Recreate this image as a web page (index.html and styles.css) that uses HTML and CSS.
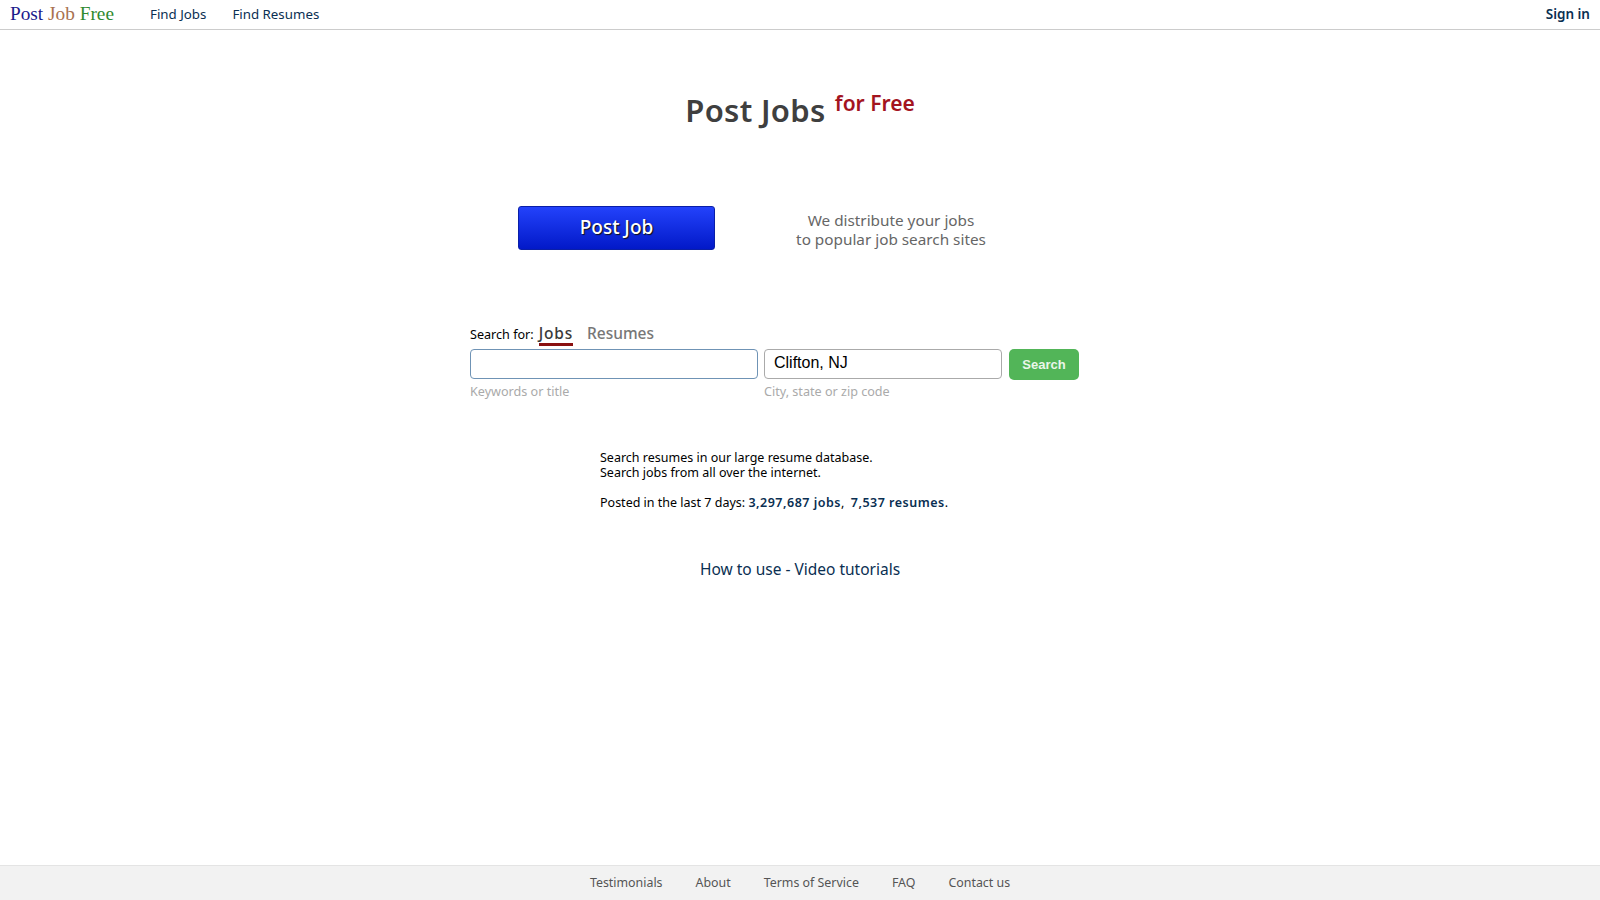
FILE: index.html
```html
<!DOCTYPE html>
<html lang="en">
<head>
    <meta charset="UTF-8">
    <meta name="viewport" content="width=device-width, initial-scale=1.0">
    <title>Post Job Free</title>
    <link rel="stylesheet" href="styles.css">
</head>
<body>

    <!-- Top bar -->
    <header class="topbar">
        <a class="logo" href="#"><span class="logo-post">Post</span> <span class="logo-job">Job</span> <span class="logo-free">Free</span></a>
        <nav class="topnav">
            <a href="#">Find Jobs</a>
            <a href="#">Find Resumes</a>
        </nav>
        <a class="signin" href="#">Sign in</a>
    </header>

    <main class="content">
        <h1 class="headline">Post Jobs <sup>for Free</sup></h1>

        <div class="post-row">
            <a class="post-button" href="#">Post Job</a>
            <p class="post-note">We distribute your jobs<br>to popular job search sites</p>
        </div>

        <!-- Search form -->
        <form class="search">
            <div class="search-tabs">
                <span class="search-label">Search for:</span>
                <a class="tab tab-active" href="#">Jobs</a>
                <a class="tab" href="#">Resumes</a>
            </div>
            <div class="search-fields">
                <div class="field">
                    <input class="input input-keywords" type="text">
                    <span class="hint">Keywords or title</span>
                </div>
                <div class="field">
                    <input class="input input-location" type="text" value="Clifton, NJ">
                    <span class="hint">City, state or zip code</span>
                </div>
                <button class="search-button" type="button">Search</button>
            </div>
        </form>

        <div class="stats">
            <p>Search resumes in our large resume database.<br>Search jobs from all over the internet.</p>
            <p>Posted in the last 7 days: <a href="#">3,297,687 jobs</a>, &nbsp;<a href="#">7,537 resumes</a>.</p>
        </div>

        <a class="tutorials" href="#">How to use - Video tutorials</a>
    </main>

    <footer class="footer">
        <a href="#">Testimonials</a>
        <a href="#">About</a>
        <a href="#">Terms of Service</a>
        <a href="#">FAQ</a>
        <a href="#">Contact us</a>
    </footer>

</body>
</html>
```

FILE: styles.css
```css
/* Global Styles */
* {
    margin: 0;
    padding: 0;
    box-sizing: border-box;
}

html, body {
    height: 100%;
}

body {
    font-family: 'Noto Sans', 'DejaVu Sans', sans-serif;
    font-size: 12.5px;
    color: #000;
    background: #fff;
    display: flex;
    flex-direction: column;
}

a {
    color: #0a2f52;
    text-decoration: none;
}

/* Top bar */
.topbar {
    display: flex;
    align-items: center;
    height: 30px;
    padding: 0 10px 2px;
    border-bottom: 1px solid #ccc;
    flex-shrink: 0;
}

.logo {
    width: 140px;
    font-family: 'Liberation Serif', serif;
    font-size: 19.3px;
}

.logo-post { color: #1a1a8c; }
.logo-job { color: #a8714f; }
.logo-free { color: #2f8a2f; }

.topnav {
    display: flex;
    gap: 26px;
    font-size: 13.3px;
}

.signin {
    margin-left: auto;
    font-size: 13.5px;
    font-weight: 600;
}

/* Main column */
.content {
    flex: 1;
    display: flex;
    flex-direction: column;
}

.headline {
    margin-top: 62px;
    text-align: center;
    font-size: 31px;
    line-height: 36px;
    font-weight: 600;
    letter-spacing: 0.3px;
    color: #3f3f3f;
}

.headline sup {
    font-size: 21px;
    line-height: 0;
    letter-spacing: 0;
    color: #a3141f;
    margin-left: 1px;
    vertical-align: 11px;
}

.post-row {
    display: flex;
    align-items: center;
    margin: 78px 0 0 518px;
}

.post-button {
    width: 197px;
    height: 44px;
    line-height: 41px;
    text-align: center;
    font-size: 19px;
    font-weight: 500;
    color: #fff;
    text-shadow: 1px 1px 1px #111;
    background: linear-gradient(#2342fb, #0219c8);
    border: 1px solid #0a1fa8;
    border-radius: 3px;
}

.post-note {
    width: 190px;
    margin: 4px 0 0 81px;
    text-align: center;
    font-size: 15.3px;
    line-height: 19px;
    color: #666;
    white-space: nowrap;
}

/* Search form */
.search {
    margin: 72px 0 0 470px;
}

.search-tabs {
    display: flex;
    align-items: baseline;
    height: 25px;
}

.search-label {
    font-size: 12.6px;
    margin-right: 5px;
}

.tab {
    font-size: 15.5px;
    font-weight: 500;
    color: #777;
    margin-right: 14px;
    height: 24px;
}

.tab-active {
    color: #3a3a3a;
    letter-spacing: 0.8px;
    border-bottom: 3px solid #8a1010;
}

.search-fields {
    display: flex;
    align-items: flex-start;
    gap: 6px;
    margin-top: 2px;
}

.field {
    display: flex;
    flex-direction: column;
}

.input {
    height: 30px;
    padding: 0 8px 2px 9px;
    font-family: 'Liberation Sans', sans-serif;
    font-size: 16px;
    color: #000;
    background: #fff;
    border: 1px solid #aaa;
    border-radius: 4px;
    outline: none;
}

.input-keywords {
    width: 288px;
    border-color: #6f93b5;
}

.input-location {
    width: 238px;
}

.hint {
    margin-top: 5px;
    font-size: 12.6px;
    line-height: 16px;
    color: #aaa;
}

.search-button {
    width: 70px;
    height: 31px;
    margin-left: 1px;
    font-family: 'Liberation Sans', sans-serif;
    font-size: 13px;
    font-weight: bold;
    color: #eaf6ea;
    background: #52b558;
    border: none;
    border-radius: 5px;
}

/* Stats */
.stats {
    margin: 50px 0 0 600px;
    line-height: 15px;
}

.stats p {
    margin-bottom: 15px;
}

.stats a {
    font-weight: 600;
    letter-spacing: 0.5px;
}

.tutorials {
    align-self: center;
    margin-top: 34px;
    font-size: 15.5px;
    line-height: 20px;
}

/* Footer */
.footer {
    display: flex;
    justify-content: center;
    align-items: center;
    gap: 33px;
    height: 35px;
    padding-bottom: 2px;
    flex-shrink: 0;
    background: #f2f2f2;
    border-top: 1px solid #e4e4e4;
}

.footer a {
    color: #555;
    font-size: 12.4px;
}
```
